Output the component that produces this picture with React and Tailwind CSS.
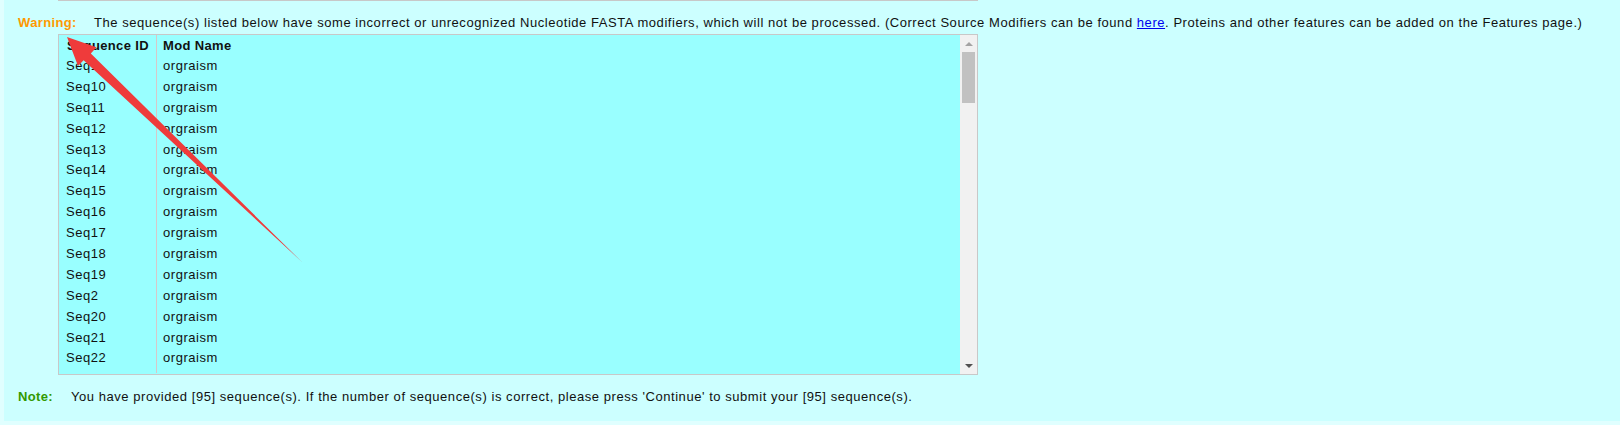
import React from 'react';

// rows come back sorted as strings, like the original list (Seq1, Seq10, Seq11 ...)
const allRows = Array.from({ length: 95 }, (_, i) => 'Seq' + (i + 1)).sort();
// only the part that fits in the box is shown
const rows = allRows.slice(0, 15);

function FakeScrollbar() {
  return (
    <div className="flex w-[17px] shrink-0 flex-col bg-[#f1f1f1]">
      <div className="flex h-[17px] items-center justify-center">
        <div className="h-0 w-0 border-x-[4px] border-b-[4px] border-x-transparent border-b-[#a3a3a3]"></div>
      </div>
      <div className="ml-[2px] h-[51px] w-[13px] bg-[#c1c1c1]"></div>
      <div className="flex-1"></div>
      <div className="flex h-[17px] items-center justify-center">
        <div className="h-0 w-0 border-x-[4px] border-t-[4px] border-x-transparent border-t-[#505050]"></div>
      </div>
    </div>
  );
}

export default function App() {
  return (
    <div
      className="relative h-[425px] w-[1620px] overflow-hidden bg-[#e0ffff] text-[13px] tracking-[0.55px] text-[#111]"
      style={{ fontFamily: '"Liberation Sans", Arial, sans-serif' }}
    >
      <div className="ml-[4px] h-[421px] bg-[#ccffff]">
        {/* leftover border of the box above */}
        <div className="ml-[54px] h-px w-[920px] bg-[#c8c8c8]"></div>

        {/* Warning */}
        <div className="mt-[14px] flex pl-[14px] leading-[16px]">
          <span className="w-[76px] shrink-0 font-bold tracking-[0.35px] text-[#ff9900]">Warning:</span>
          <span>
            The sequence(s) listed below have some incorrect or unrecognized Nucleotide FASTA modifiers, which will not be
            processed. (Correct Source Modifiers can be found{' '}
            <a href="#" className="text-[#0000ee] underline">here</a>. Proteins and other features can be added on the
            Features page.)
          </span>
        </div>

        {/* table box */}
        <div className="ml-[54px] mt-[3px] flex h-[341px] w-[920px] border border-[#c8c8c8] bg-[#99ffff]">
          <div className="flex-1 overflow-hidden">
            <div className="flex h-[21px] items-center font-bold tracking-[0.35px]">
              <div className="h-full w-[98px] border-r border-[#d7c8c8] pl-[8px] leading-[21px]">Sequence ID</div>
              <div className="pl-[6px]">Mod Name</div>
            </div>
            {rows.map((id) => (
              <div key={id} className="flex h-[20.9px] leading-[20.9px]">
                <div className="h-full w-[98px] border-r border-[#d7c8c8] pl-[7px]">{id}</div>
                <div className="pl-[6px]">orgraism</div>
              </div>
            ))}
            <div className="h-[4px] w-[98px] border-r border-[#d7c8c8]"></div>
          </div>
          <FakeScrollbar />
        </div>

        {/* Note */}
        <div className="mt-[14px] flex pl-[14px] leading-[16px]">
          <span className="w-[53px] shrink-0 font-bold tracking-[0.35px] text-[#339900]">Note:</span>
          <span>
            You have provided [95] sequence(s). If the number of sequence(s) is correct, please press 'Continue' to submit
            your [95] sequence(s).
          </span>
        </div>
      </div>

      {/* red annotation arrow drawn over the page */}
      <svg className="pointer-events-none absolute left-0 top-0" width="1620" height="425">
        <polygon
          points="67,37 96.5,47.2 90.8,53.6 302,262 83.6,60.3 78,66"
          fill="#ef3b3b"
        />
      </svg>
    </div>
  );
}
